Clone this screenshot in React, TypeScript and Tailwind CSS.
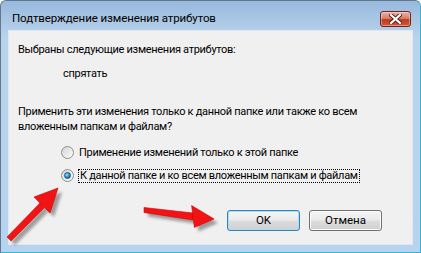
import React from 'react';

const font = { fontFamily: 'Roboto, "Liberation Sans", sans-serif' };

const CloseButton: React.FC = () => (
  <div className="w-[31px] h-[16px] rounded-[3px] border border-[#6e2418] bg-[linear-gradient(to_bottom,#eab0a2,#d9816c_45%,#c0391d_55%,#d25a3a)] flex items-center justify-center shadow-[inset_0_0_0_1px_rgba(255,255,255,0.35)]">
    <svg width="13" height="10" viewBox="0 0 13 10">
      <path d="M2 1 L11 9 M11 1 L2 9" stroke="#5a1e14" strokeWidth="4" strokeLinecap="square" />
      <path d="M2 1 L11 9 M11 1 L2 9" stroke="#ffffff" strokeWidth="2.2" strokeLinecap="square" />
    </svg>
  </div>
);

const Radio: React.FC<{ checked?: boolean }> = ({ checked }) => (
  <div className="w-[13px] h-[13px] rounded-full border border-[#8e8f8f] bg-[linear-gradient(135deg,#d5d5d5,#fbfbfb)] flex items-center justify-center shrink-0">
    {checked && (
      <div className="w-[7px] h-[7px] rounded-full bg-[radial-gradient(circle_at_35%_35%,#9fe0ff,#1a8ed0_55%,#0c4f86)] border border-[#164f7c]" />
    )}
  </div>
);

const Arrows: React.FC = () => (
  <svg className="absolute inset-0 pointer-events-none" width="421" height="253" viewBox="0 0 421 253">
    <defs>
      <filter id="blur" x="-20%" y="-20%" width="140%" height="140%">
        <feGaussianBlur stdDeviation="1.6" />
      </filter>
    </defs>
    <g transform="translate(4 4)" fill="#000" opacity="0.35" filter="url(#blur)">
      <polygon points="6,236 10,240 43,207 39,202" />
      <polygon points="57,187 33,196 49,212" />
      <polygon points="143,206.5 143,211.5 192,219 192,212" />
      <polygon points="213,218 190.6,204.6 193.4,226.4" />
    </g>
    <g fill="#f21414" stroke="#d00000" strokeWidth="0.6" strokeLinejoin="round">
      <polygon points="6,236 10,240 43,207 39,202" />
      <polygon points="57,187 33,196 49,212" />
      <polygon points="143,206.5 143,211.5 192,219 192,212" />
      <polygon points="213,218 190.6,204.6 193.4,226.4" />
    </g>
  </svg>
);

const Button: React.FC<{ label: string; focused?: boolean }> = ({ label, focused }) => (
  <div
    className={`w-[73px] h-[21px] rounded-[3px] border flex items-center justify-center text-[11.5px] text-black bg-[linear-gradient(to_bottom,#f4f4f4,#ebebeb_48%,#dddddd_52%,#cfcfcf)] ${
      focused
        ? 'border-[#3c7fb1] shadow-[inset_0_0_0_1px_#9fe1f7]'
        : 'border-[#707070] shadow-[inset_0_0_0_1px_#fcfcfc]'
    }`}
  >
    {label}
  </div>
);

export default function App() {
  return (
    <div
      style={font}
      className="relative w-[421px] h-[253px] overflow-hidden rounded-t-[6px] border border-[#62788f] border-b-[#3ab3d3] border-r-[#3ab3d3] bg-[linear-gradient(to_bottom,#98b9dc,#bad3ec_36px,#b6d3ef)] flex flex-col"
    >
      <div className="h-[29px] shrink-0 flex items-center pt-[7px] pl-[11px] pr-[9px]">
        <div className="flex-1 text-[11.5px] tracking-[-0.1px] text-black leading-none">Подтверждение изменения атрибутов</div>
        <CloseButton />
      </div>

      <div className="mx-[7px] h-[215px] bg-[#f0f0f0] border border-[#dfe8f3] flex flex-col text-[11px] tracking-[-0.3px] leading-[15px] text-black pl-[9px]">
        <div className="mt-[11px]">Выбраны следующие изменения атрибутов:</div>
        <div className="mt-[9px] pl-[45px]">спрятать</div>
        <div className="mt-[23px] w-[360px]">
          Применить эти изменения только к данной папке или также ко всем вложенным папкам и файлам?
        </div>

        <div className="mt-[10px] h-[17px] pl-[43px] flex items-center gap-[4px]">
          <Radio />
          <span className="px-[1px]">Применение изменений только к этой папке</span>
        </div>
        <div className="mt-[6px] h-[17px] pl-[43px] flex items-center gap-[4px]">
          <Radio checked />
          <span className="px-[1px] border border-dotted border-black leading-[12px]">
            К данной папке и ко всем вложенным папкам и файлам
          </span>
        </div>

        <div className="mt-[26px] flex justify-end gap-[9px] pr-[30px] tracking-normal">
          <Button label="OK" focused />
          <Button label="Отмена" />
        </div>
      </div>

      <Arrows />
    </div>
  );
}
